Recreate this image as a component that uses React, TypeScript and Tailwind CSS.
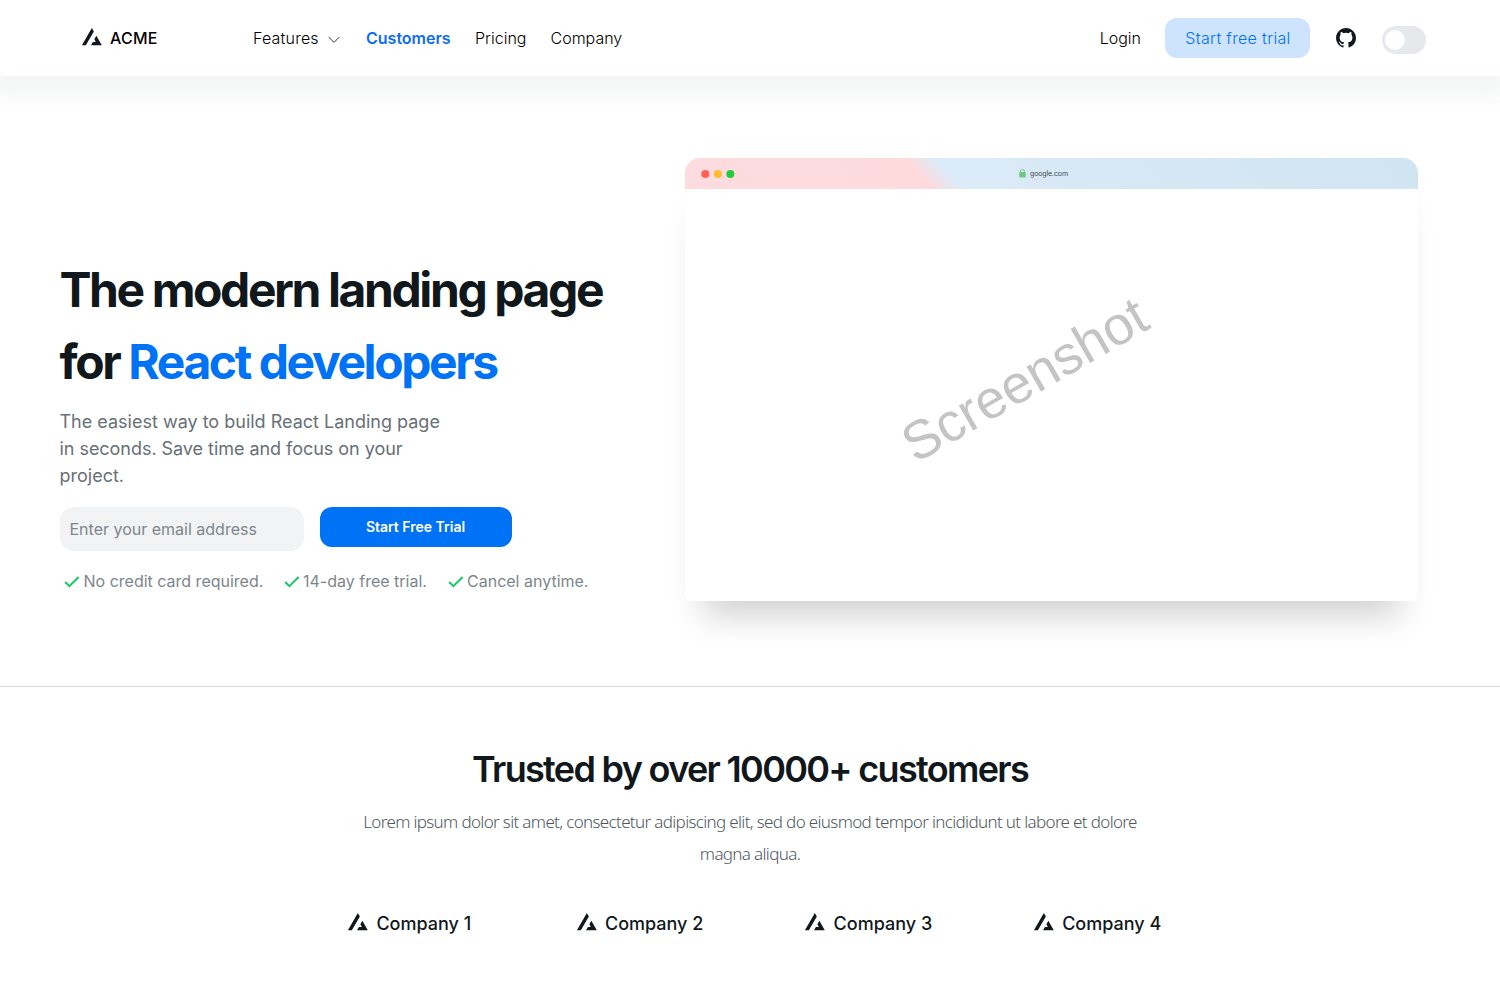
import React from "react";

const sans = "font-['Inter','Liberation_Sans',sans-serif]";

function Logo({ className = "" }: { className?: string }) {
  return (
    <svg className={"shrink-0 " + className} width="36" height="36" viewBox="0 0 32 32" fill="none">
      <path
        fill="#11181c"
        fillRule="evenodd"
        clipRule="evenodd"
        d="M17.6482 10.1305L15.8785 7.02583L7.02979 22.5499H10.5278L17.6482 10.1305ZM19.8798 14.0457L18.11 17.1983L19.394 19.4511H16.8453L15.1056 22.5499H24.7272L19.8798 14.0457Z"
      />
    </svg>
  );
}

function Check() {
  return (
    <svg width="16" height="14" viewBox="0 0 16 14" fill="none" className="mt-0.5 shrink-0" stroke="#17c964" strokeWidth="2">
      <path d="M1.2 7L5.4 11.2L14.6 2" />
    </svg>
  );
}

function Navbar() {
  return (
    <nav className="relative flex h-[76px] items-center bg-white pl-[74px] pr-[74px] text-[16px] font-light text-black shadow-[0_12px_20px_6px_rgba(104,112,118,0.08)]">
      <Logo />
      <span className="w-[143px] text-[16px] font-medium tracking-[0.2px]">ACME</span>
      <span className="w-[66px] whitespace-nowrap tracking-[0.2px]">Features</span>
      <svg className="mx-[9px] mt-[3px]" width="12" height="8" viewBox="0 0 12 8" fill="none" stroke="#222" strokeWidth="0.9">
        <path d="M0.6 1L6 6.4L11.4 1" />
      </svg>
      <span className="ml-[17px] w-[109px] whitespace-nowrap font-semibold text-[#0f6cf5]">Customers</span>
      <span className="w-[75.5px]">Pricing</span>
      <span>Company</span>
      <span className="ml-auto">Login</span>
      <button className="ml-6 h-10 w-[145px] rounded-xl bg-[#cee4fe] pl-2 pr-[7px] font-light tracking-[0.33px] text-[#0072f5]">Start free trial</button>
      <svg className="ml-6" width="24" height="24" viewBox="0 0 24 24">
        <path
          fill="#11181c"
          fillRule="evenodd"
          clipRule="evenodd"
          d="M12.026 2c-5.509 0-9.974 4.465-9.974 9.974 0 4.406 2.857 8.145 6.821 9.465.499.09.679-.217.679-.481 0-.237-.008-.865-.011-1.696-2.775.602-3.361-1.338-3.361-1.338-.452-1.152-1.107-1.459-1.107-1.459-.905-.619.069-.605.069-.605 1.002.07 1.527 1.028 1.527 1.028.89 1.524 2.336 1.084 2.902.829.091-.645.351-1.085.635-1.334-2.214-.251-4.542-1.107-4.542-4.93 0-1.087.389-1.979 1.024-2.675-.101-.253-.446-1.268.099-2.64 0 0 .837-.269 2.742 1.021a9.582 9.582 0 0 1 2.496-.336 9.554 9.554 0 0 1 2.496.336c1.906-1.291 2.742-1.021 2.742-1.021.545 1.372.203 2.387.099 2.64.64.696 1.024 1.587 1.024 2.675 0 3.833-2.33 4.675-4.552 4.922.355.308.675.916.675 1.846 0 1.334-.012 2.41-.012 2.737 0 .267.178.577.687.479C19.146 20.115 22 16.379 22 11.974 22 6.465 17.535 2 12.026 2z"
        />
      </svg>
      <span className="ml-6 mt-1 flex h-7 w-11 items-center rounded-full bg-[#e6e8eb] pl-[3px]">
        <span className="h-5 w-5 rounded-full bg-white" />
      </span>
    </nav>
  );
}

function Browser() {
  return (
    <div className="mt-[82px] h-[443px] w-[733px] rounded-t-[15px] rounded-b-[6px] bg-white shadow-[0_33px_32px_-18px_rgba(0,0,0,0.18)]">
      <div className="flex h-[31.4px] items-center rounded-t-[15px] bg-[linear-gradient(48deg,#fcdcdf_0%,#fedadd_32.5%,#dcebf8_36.5%,#d5e8f4_60%,#d1e4f1_100%)] pl-[15.5px]">
        <svg width="34" height="10" viewBox="0 0 34 10" className="mt-px">
          <circle cx="4.3" cy="5" r="4" fill="#ff5f57" />
          <circle cx="16.8" cy="5" r="4" fill="#febc2e" />
          <circle cx="29.3" cy="5" r="4" fill="#28c840" />
        </svg>
        <div className="ml-[284.5px] flex items-center gap-1 text-[7px] tracking-[-0.12px] text-[#3f4c55]">
          <svg width="7" height="9" viewBox="0 0 7 9" fill="none">
            <rect x="0.2" y="3" width="6.6" height="5.4" rx="1" fill="#6ccb80" />
            <path d="M1.6 3.4V2.2a1.9 1.9 0 0 1 3.8 0v1.2" stroke="#6ccb80" strokeWidth="0.9" />
          </svg>
          <span className="pt-px">google.com</span>
        </div>
      </div>
      <div className="flex h-[380px] items-center justify-center pr-[54px]">
        <span className="-rotate-30 font-['Liberation_Sans',sans-serif] text-[54px] text-[#c4c4c4]">Screenshot</span>
      </div>
    </div>
  );
}

function Hero() {
  return (
    <section className="flex h-[611px] border-b border-[#d7dbdf] pl-[60px]">
      <div className="w-[625px] pt-[178px]">
        <h1 className="-ml-[0.5px] whitespace-nowrap text-[48px] font-bold leading-[72px] tracking-[-2.42px] text-[#11181c]">
          The modern landing page
          <br />
          for <span className="text-[#0072f5]">React developers</span>
        </h1>
        <p className="mt-[10px] -ml-[0.5px] whitespace-nowrap text-[18px] leading-[27px] text-[#687076]">
          The easiest way to build React Landing page
          <br />
          <span className="tracking-[-0.04px]">in seconds. Save time and focus on your</span>
          <br />
          project.
        </p>
        <div className="mt-[18px] flex gap-4">
          <div className="flex h-11 w-[244px] items-center rounded-[14px] bg-[#f1f3f5] pl-[9.5px] text-[16px] text-[#7e868c]">
            Enter your email address
          </div>
          <button className="h-10 w-48 rounded-xl bg-[#0072f5] pb-0.5 pr-px text-[14px] font-semibold text-white">Start Free Trial</button>
        </div>
        <div className="mt-[18px] flex pl-[4px] text-[16px] leading-6 text-[#7e868c]">
          <span className="flex w-[219.5px] items-center gap-[3.5px] whitespace-nowrap"><Check />No credit card required.</span>
          <span className="flex w-[164px] items-center gap-[3.5px] whitespace-nowrap"><Check />14-day free trial.</span>
          <span className="flex items-center gap-[3.5px] whitespace-nowrap"><Check />Cancel anytime.</span>
        </div>
      </div>
      <Browser />
    </section>
  );
}

function Trusted() {
  return (
    <section className="flex flex-col items-center pt-[55px]">
      <h2 className="text-[36px] font-semibold leading-[54px] tracking-[-1.68px] text-[#11181c]">Trusted by over 10000+ customers</h2>
      <p className="mt-[10px] whitespace-nowrap text-center font-['Noto_Sans',sans-serif] text-[17px] font-light leading-8 tracking-[-0.65px] text-[#50585e]">
        Lorem ipsum dolor sit amet, consectetur adipiscing elit, sed do eiusmod tempor incididunt ut labore et dolore
        <br />
        magna aliqua.
      </p>
      <div className="mt-[34.5px] flex w-[820px] text-[18px] font-medium text-[#11181c]">
        {[1, 2, 3, 4].map((n) => (
          <div key={n} className="flex w-[228.6px] shrink-0 items-center whitespace-nowrap">
            <Logo />
            <span className="pl-[0.4px] pt-0.5">Company {n}</span>
          </div>
        ))}
      </div>
    </section>
  );
}

export default function App() {
  return (
    <div className={sans + " h-[1000px] w-[1500px] overflow-hidden bg-white"}>
      <Navbar />
      <Hero />
      <Trusted />
    </div>
  );
}
